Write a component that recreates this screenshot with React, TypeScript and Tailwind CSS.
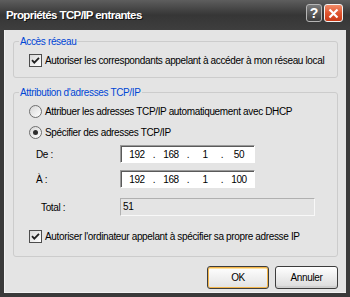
import React from "react";

const FONT = { fontFamily: '"Liberation Sans", Arial, sans-serif' };

function Check() {
  return (
    <span className="w-[13px] h-[13px] shrink-0 border border-[#4d4d4d] bg-gradient-to-br from-[#d8d8d8] to-white flex items-center justify-center">
      <svg width="11" height="11" viewBox="0 0 11 11">
        <path d="M2 5.2 L4.3 7.6 L9 2.8" fill="none" stroke="#1f1f1f" strokeWidth="1.8" />
      </svg>
    </span>
  );
}

function Radio({ on }: { on?: boolean }) {
  return (
    <span className="w-[13px] h-[13px] shrink-0 rounded-full border border-[#6e6e6e] bg-gradient-to-br from-[#d6d6d6] to-white flex items-center justify-center">
      {on && <span className="w-[5px] h-[5px] rounded-full bg-[#2e2e2e]" />}
    </span>
  );
}

function Ip({ parts }: { parts: string[] }) {
  return (
    <div className="w-[135px] h-[18px] bg-white border border-t-[#9a9a9a] border-l-[#9a9a9a] border-b-white border-r-white shadow-[inset_1px_1px_0_#5a5a5a] flex items-center pl-[1px]">
      {parts.map((p, i) => (
        <React.Fragment key={i}>
          {i > 0 && <span className="w-[4px] text-center">.</span>}
          <span className="w-[30px] text-center">{p}</span>
        </React.Fragment>
      ))}
    </div>
  );
}

export default function App() {
  return (
    <div className="w-[350px] h-[297px] flex flex-col bg-[#3a3a3a] text-[10px] tracking-[-0.35px] leading-[13px] text-black whitespace-nowrap" style={FONT}>
      <div className="h-[30px] shrink-0 flex items-center bg-gradient-to-b from-[#5e5e5e] via-[#363636] to-[#3e3e3e] pl-[6px] pr-[7px]">
        <span className="text-white font-bold text-[11.5px] tracking-[-0.6px] [text-shadow:1px_1px_0_#111] flex-1">Propriétés TCP/IP entrantes</span>
        <div className="flex gap-[2px] self-start mt-[4px] tracking-normal">
          <div className="w-[16px] h-[18px] rounded-[3px] border border-[#b5b5b5] bg-gradient-to-b from-[#7a7a7a] to-[#3e3e3e] flex items-center justify-center text-white font-bold text-[14px]">?</div>
          <div className="w-[19px] h-[18px] rounded-[3px] border border-[#f2f2f2] bg-gradient-to-b from-[#f08b68] via-[#e0552f] to-[#c93a17] flex items-center justify-center">
            <svg width="11" height="11" viewBox="0 0 11 11">
              <path d="M1.5 1.5 L9.5 9.5 M9.5 1.5 L1.5 9.5" stroke="white" strokeWidth="2.2" />
            </svg>
          </div>
        </div>
      </div>
      <div className="flex-1 mx-[4px] mb-[4px] bg-[#e4e4e4] border-l border-b border-[#f2f2f2] flex flex-col pt-[5px] pl-[8px] pr-[8px]">
        <fieldset className="border border-[#cccccc] rounded-[3px] pb-[10px]">
          <legend className="ml-[5px] px-[1px] text-[#0046d5]">Accès réseau</legend>
          <div className="mt-[6px] h-[13px] flex items-center pl-[15px] gap-[3px]">
            <Check />
            <span>Autoriser les correspondants appelant à accéder à mon réseau local</span>
          </div>
        </fieldset>
        <fieldset className="mt-[8px] border border-[#cccccc] rounded-[3px] pb-[13px]">
          <legend className="ml-[5px] px-[1px] text-[#0046d5]">Attribution d'adresses TCP/IP</legend>
          <div className="mt-[6px] h-[13px] flex items-center pl-[15px] gap-[3px]">
            <Radio />
            <span>Attribuer les adresses TCP/IP automatiquement avec DHCP</span>
          </div>
          <div className="mt-[8px] h-[13px] flex items-center pl-[15px] gap-[3px]">
            <Radio on />
            <span>Spécifier des adresses TCP/IP</span>
          </div>
          <div className="mt-[6px] h-[18px] flex items-center pl-[22px]">
            <span className="w-[84px]">De :</span>
            <Ip parts={["192", "168", "1", "50"]} />
          </div>
          <div className="mt-[7px] h-[18px] flex items-center pl-[22px]">
            <span className="w-[84px]">À :</span>
            <Ip parts={["192", "168", "1", "100"]} />
          </div>
          <div className="mt-[10px] h-[18px] flex items-center pl-[27px]">
            <span className="w-[79px]">Total :</span>
            <div className="w-[195px] h-[18px] border border-t-[#b0b0b0] border-l-[#b0b0b0] border-b-[#f8f8f8] border-r-[#f8f8f8] pl-[2px] pt-[1px]">51</div>
          </div>
          <div className="mt-[14px] h-[13px] flex items-center pl-[15px] gap-[3px]">
            <Check />
            <span>Autoriser l'ordinateur appelant à spécifier sa propre adresse IP</span>
          </div>
        </fieldset>
        <div className="mt-[9px] flex justify-end gap-[6px]">
          <button className="w-[62px] h-[23px] rounded-[3px] border border-[#3d3d3d] bg-gradient-to-b from-white to-[#e2e2e2] shadow-[inset_0_0_0_1px_#f3b54a,inset_0_2px_0_0_#fde2a0]">OK</button>
          <button className="w-[63px] h-[23px] rounded-[3px] border border-[#3d3d3d] bg-gradient-to-b from-white to-[#dadada] shadow-[inset_0_-2px_0_0_#cfcfcf]">Annuler</button>
        </div>
      </div>
    </div>
  );
}
